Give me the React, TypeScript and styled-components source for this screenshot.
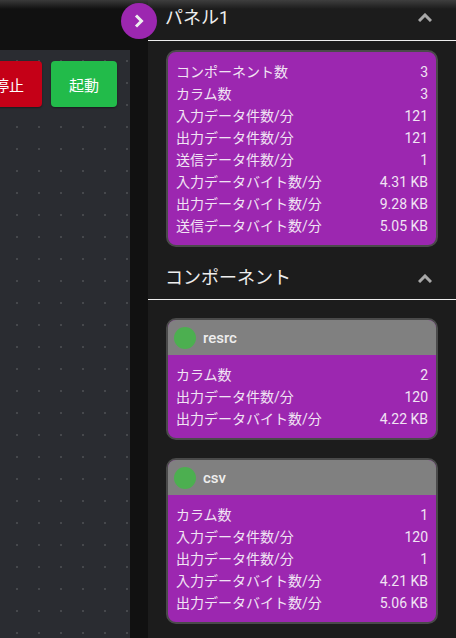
import React from "react";
import styled, { createGlobalStyle } from "styled-components";

const Global = createGlobalStyle`
  html, body { margin: 0; padding: 0; background: #111; }
  body { font-family: Roboto, "Noto Sans CJK JP", sans-serif; }
  * { box-sizing: border-box; }
`;

const Page = styled.div`
  display: flex;
  width: 456px;
  height: 638px;
  overflow: hidden;
`;

const Workspace = styled.main`
  display: flex;
  flex-direction: column;
  width: 148px;
  flex: none;
  padding-top: 50px;
  padding-right: 18px;
  background: linear-gradient(#3a3a3a 0, #111 9px);
`;

const Canvas = styled.div`
  flex: 1;
  display: flex;
  align-items: flex-start;
  justify-content: flex-end;
  gap: 9px;
  padding: 11px 13px;
  overflow: hidden;
  background-color: #2a2c31;
  background-image: linear-gradient(#46484c, #46484c);
  background-size: 22px 22px;
  background-image: radial-gradient(circle at 1px 1px, #46484c 1px, transparent 1.2px);
  background-repeat: repeat;
  background-position: 16px 10px;
`;

const ActionButton = styled.button<{ $bg: string }>`
  flex: none;
  width: 66px;
  height: 46px;
  border: none;
  border-radius: 4px;
  background: ${(p) => p.$bg};
  color: #fff;
  font: 400 15px Roboto, "Noto Sans CJK JP", sans-serif;
  box-shadow: 0 1px 2px rgba(0, 0, 0, 0.4);
`;

const Panel = styled.aside`
  position: relative;
  flex: 1;
  display: flex;
  flex-direction: column;
  background: linear-gradient(#3e3e3e 0, #1c1c1c 9px);
`;

const ToggleButton = styled.button`
  position: absolute;
  left: -27px;
  top: 3px;
  width: 36px;
  height: 36px;
  padding: 0;
  border: none;
  border-radius: 50%;
  background: #9c27b0;
  display: flex;
  align-items: center;
  justify-content: center;
`;

const SectionHeader = styled.header<{ $h: number; $top: number; $bottom: number }>`
  display: flex;
  align-items: center;
  justify-content: space-between;
  height: ${(p) => p.$h}px;
  padding: ${(p) => p.$top}px 24px ${(p) => p.$bottom}px 17px;
  border-bottom: 1px solid #eee;
`;

const SectionTitle = styled.h2`
  margin: 0;
  font-size: 18px;
  font-weight: 400;
  line-height: 24px;
  color: #eee;
`;

const Cards = styled.div<{ $top: number }>`
  display: flex;
  flex-direction: column;
  gap: 18px;
  padding: ${(p) => p.$top}px 18px 0;
`;

const Card = styled.section`
  border: 2px solid #4a4a4a;
  border-radius: 10px;
  overflow: hidden;
  background: #9c27b0;
`;

const CardHead = styled.div`
  display: flex;
  align-items: center;
  gap: 7px;
  height: 35px;
  padding: 0 6px;
  background: #808080;
`;

const StatusDot = styled.span`
  width: 22px;
  height: 22px;
  border-radius: 50%;
  background: #4caf50;
`;

const CardName = styled.span`
  font-size: 15px;
  font-weight: 500;
  color: #eee;
`;

const Rows = styled.dl`
  margin: 0;
  padding: 9px 8px 8px 8px;
`;

const Row = styled.div`
  display: flex;
  justify-content: space-between;
  height: 22px;
  line-height: 22px;
  font-size: 14px;
  color: #f1e4f4;
`;

const Label = styled.dt``;
const Value = styled.dd`
  margin: 0;
`;

const ChevronUp = () => (
  <svg width="14" height="9" viewBox="0 0 14 9" fill="none" stroke="#a8a8a8" strokeWidth="3">
    <path d="M1 8 7 2l6 6" />
  </svg>
);

const ChevronRight = () => (
  <svg width="10" height="14" viewBox="0 0 10 14" fill="none" stroke="#eee" strokeWidth="3">
    <path d="M2 1.5 7.5 7 2 12.5" />
  </svg>
);

const StatRows = ({ items }: { items: [string, string][] }) => (
  <Rows>
    {items.map(([k, v]) => (
      <Row key={k}>
        <Label>{k}</Label>
        <Value>{v}</Value>
      </Row>
    ))}
  </Rows>
);

const panelStats: [string, string][] = [
  ["コンポーネント数", "3"],
  ["カラム数", "3"],
  ["入力データ件数/分", "121"],
  ["出力データ件数/分", "121"],
  ["送信データ件数/分", "1"],
  ["入力データバイト数/分", "4.31 KB"],
  ["出力データバイト数/分", "9.28 KB"],
  ["送信データバイト数/分", "5.05 KB"],
];

const components: { name: string; stats: [string, string][] }[] = [
  {
    name: "resrc",
    stats: [
      ["カラム数", "2"],
      ["出力データ件数/分", "120"],
      ["出力データバイト数/分", "4.22 KB"],
    ],
  },
  {
    name: "csv",
    stats: [
      ["カラム数", "1"],
      ["入力データ件数/分", "120"],
      ["出力データ件数/分", "1"],
      ["入力データバイト数/分", "4.21 KB"],
      ["出力データバイト数/分", "5.06 KB"],
    ],
  },
];

export default function App() {
  return (
    <Page>
      <Global />
      <Workspace>
        <Canvas>
          <ActionButton $bg="#c50017">停止</ActionButton>
          <ActionButton $bg="#22bb4a">起動</ActionButton>
        </Canvas>
      </Workspace>
      <Panel>
        <ToggleButton aria-label="toggle">
          <ChevronRight />
        </ToggleButton>
        <SectionHeader $h={41} $top={0} $bottom={5}>
          <SectionTitle>パネル1</SectionTitle>
          <ChevronUp />
        </SectionHeader>
        <Cards $top={9}>
          <Card>
            <StatRows items={panelStats} />
          </Card>
        </Cards>
        <SectionHeader $h={53} $top={10} $bottom={0}>
          <SectionTitle>コンポーネント</SectionTitle>
          <ChevronUp />
        </SectionHeader>
        <Cards $top={18}>
          {components.map((c) => (
            <Card key={c.name}>
              <CardHead>
                <StatusDot />
                <CardName>{c.name}</CardName>
              </CardHead>
              <StatRows items={c.stats} />
            </Card>
          ))}
        </Cards>
      </Panel>
    </Page>
  );
}
